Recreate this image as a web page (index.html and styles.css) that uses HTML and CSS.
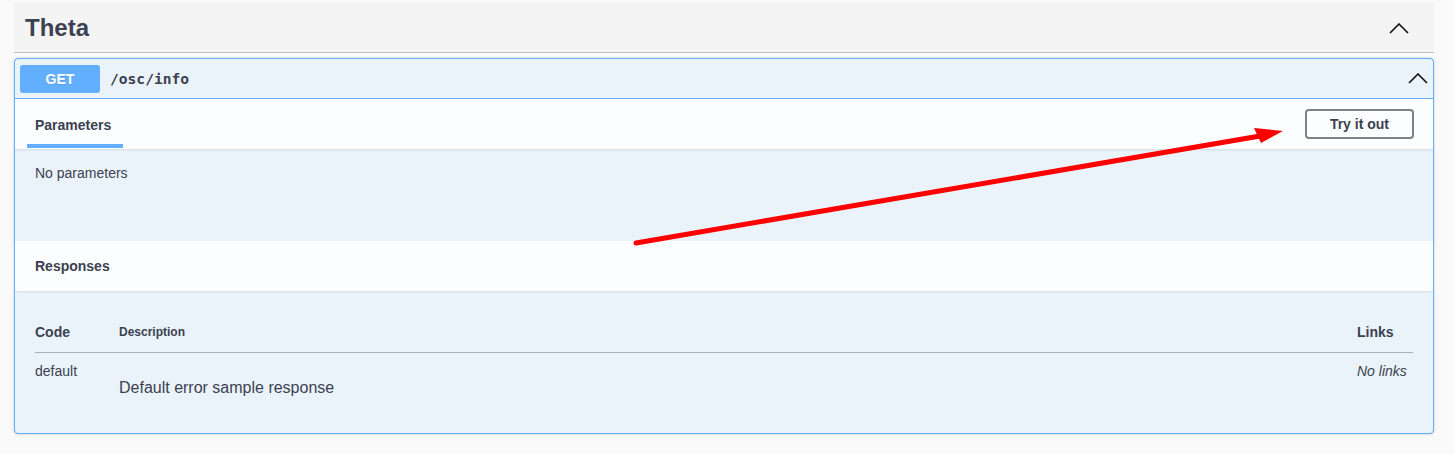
FILE: index.html
```html
<!DOCTYPE html>
<html lang="en">
<head>
<meta charset="utf-8">
<title>Theta</title>
<link rel="stylesheet" href="styles.css">
</head>
<body>
<div class="page">
  <section class="tag">
    <div class="tag-header">
      <h3 class="tag-title">Theta</h3>
      <svg class="tag-chevron" width="20" height="11" viewBox="0 0 20 11"><polyline points="1,10 10,1 19,10" fill="none" stroke="#111" stroke-width="1.6"/></svg>
    </div>
    <div class="opblock">
      <div class="summary">
        <span class="method">GET</span>
        <span class="path">/osc/info</span>
        <svg class="summary-chevron" width="20" height="11" viewBox="0 0 20 11"><polyline points="1,10 10,1 19,10" fill="none" stroke="#111" stroke-width="1.6"/></svg>
      </div>
      <div class="section-header">
        <div class="tab">Parameters</div>
        <button class="try-btn">Try it out</button>
      </div>
      <div class="params-body">
        <p class="no-params">No parameters</p>
      </div>
      <div class="section-header">
        <h4 class="section-title">Responses</h4>
      </div>
      <div class="responses-body">
        <table class="responses-table">
          <thead>
            <tr>
              <th class="col-code">Code</th>
              <th class="col-desc">Description</th>
              <th class="col-links">Links</th>
            </tr>
          </thead>
          <tbody>
            <tr>
              <td class="col-code">default</td>
              <td class="col-desc"><p class="desc-text">Default error sample response</p></td>
              <td class="col-links"><i>No links</i></td>
            </tr>
          </tbody>
        </table>
      </div>
    </div>
  </section>
  <svg class="arrow" width="1454" height="454" viewBox="0 0 1454 454">
    <line x1="636" y1="243" x2="1260" y2="136" stroke="#ff0000" stroke-width="5" stroke-linecap="round"/>
    <polygon points="1254,128 1283,131 1261,143" fill="#ff0000"/>
  </svg>
</div>
</body>
</html>
```

FILE: styles.css
```css
html, body {
  margin: 0;
  padding: 0;
  background: #fafafa;
}

body {
  font-family: "Liberation Sans", Arial, sans-serif;
  color: #3b4151;
}

.page {
  position: relative;
  width: 1454px;
  height: 454px;
  padding: 2px 20px 0 14px;
  box-sizing: border-box;
}

.tag-header {
  display: flex;
  align-items: center;
  height: 50px;
  padding: 0 25px 0 11px;
  background: #f4f4f4;
  border-bottom: 1px solid rgba(59, 65, 81, 0.3);
  margin-bottom: 5px;
}

.tag-title {
  margin: 0;
  font-size: 24px;
  font-weight: bold;
  line-height: 28px;
  color: #3b4151;
  flex: 1;
  padding-top: 2px;
}

.tag-chevron {
  display: block;
  margin-top: 2px;
}

.opblock {
  border: 1px solid #61affe;
  border-radius: 4px;
  background: #ebf3fa;
  box-shadow: 0 0 3px rgba(0, 0, 0, 0.19);
  overflow: hidden;
}

.summary {
  display: flex;
  align-items: center;
  height: 40px;
  padding: 0 5px;
  box-sizing: border-box;
  border-bottom: 1px solid #61affe;
}

.method {
  width: 80px;
  height: 28px;
  line-height: 28px;
  text-align: center;
  background: #61affe;
  border-radius: 3px;
  color: #fff;
  font-size: 14px;
  font-weight: bold;
  text-shadow: 0 1px 0 rgba(0, 0, 0, 0.1);
}

.path {
  margin-left: 10px;
  font-family: "DejaVu Sans Mono", "Liberation Mono", monospace;
  font-size: 14.6px;
  font-weight: bold;
  color: #3b4151;
  flex: 1;
}

.summary-chevron {
  display: block;
}

.section-header {
  display: flex;
  align-items: center;
  justify-content: space-between;
  height: 50px;
  padding: 0 19px 0 20px;
  background: rgba(255, 255, 255, 0.8);
  box-shadow: 0 1px 2px rgba(0, 0, 0, 0.1);
}

.tab {
  position: relative;
  font-size: 14px;
  font-weight: bold;
  line-height: 16px;
  margin-top: 2px;
}

.tab::after {
  content: "";
  position: absolute;
  left: -8px;
  right: -12px;
  top: 27px;
  height: 4px;
  background: #61affe;
}

.try-btn {
  height: 30px;
  padding: 0 23px;
  border: 2px solid #808080;
  border-radius: 4px;
  background: transparent;
  font-family: "Liberation Sans", Arial, sans-serif;
  font-size: 14px;
  font-weight: bold;
  color: #3b4151;
  margin-top: -1px;
}

.params-body {
  height: 92px;
  padding: 16px 20px 0;
  box-sizing: border-box;
}

.no-params {
  margin: 0;
  font-size: 14px;
  line-height: 16px;
}

.section-title {
  margin: 0;
  font-size: 14px;
  font-weight: bold;
  line-height: 16px;
}

.responses-body {
  padding: 21px 20px 10px;
}

.responses-table {
  width: 100%;
  border-collapse: collapse;
}

.responses-table th {
  text-align: left;
  padding: 12px 0;
  font-size: 14px;
  font-weight: bold;
  line-height: 16px;
  border-bottom: 1px solid rgba(59, 65, 81, 0.2);
}

.responses-table th.col-desc {
  font-size: 12px;
}

.responses-table td {
  text-align: left;
  vertical-align: top;
  padding: 10px 0;
  font-size: 14px;
  line-height: 16px;
}

.col-code {
  width: 84px;
}

.col-links {
  width: 56px;
}

.desc-text {
  margin: 16px 0;
  font-size: 16px;
  line-height: 18px;
}

.arrow {
  position: absolute;
  left: 0;
  top: 0;
  pointer-events: none;
}
```
